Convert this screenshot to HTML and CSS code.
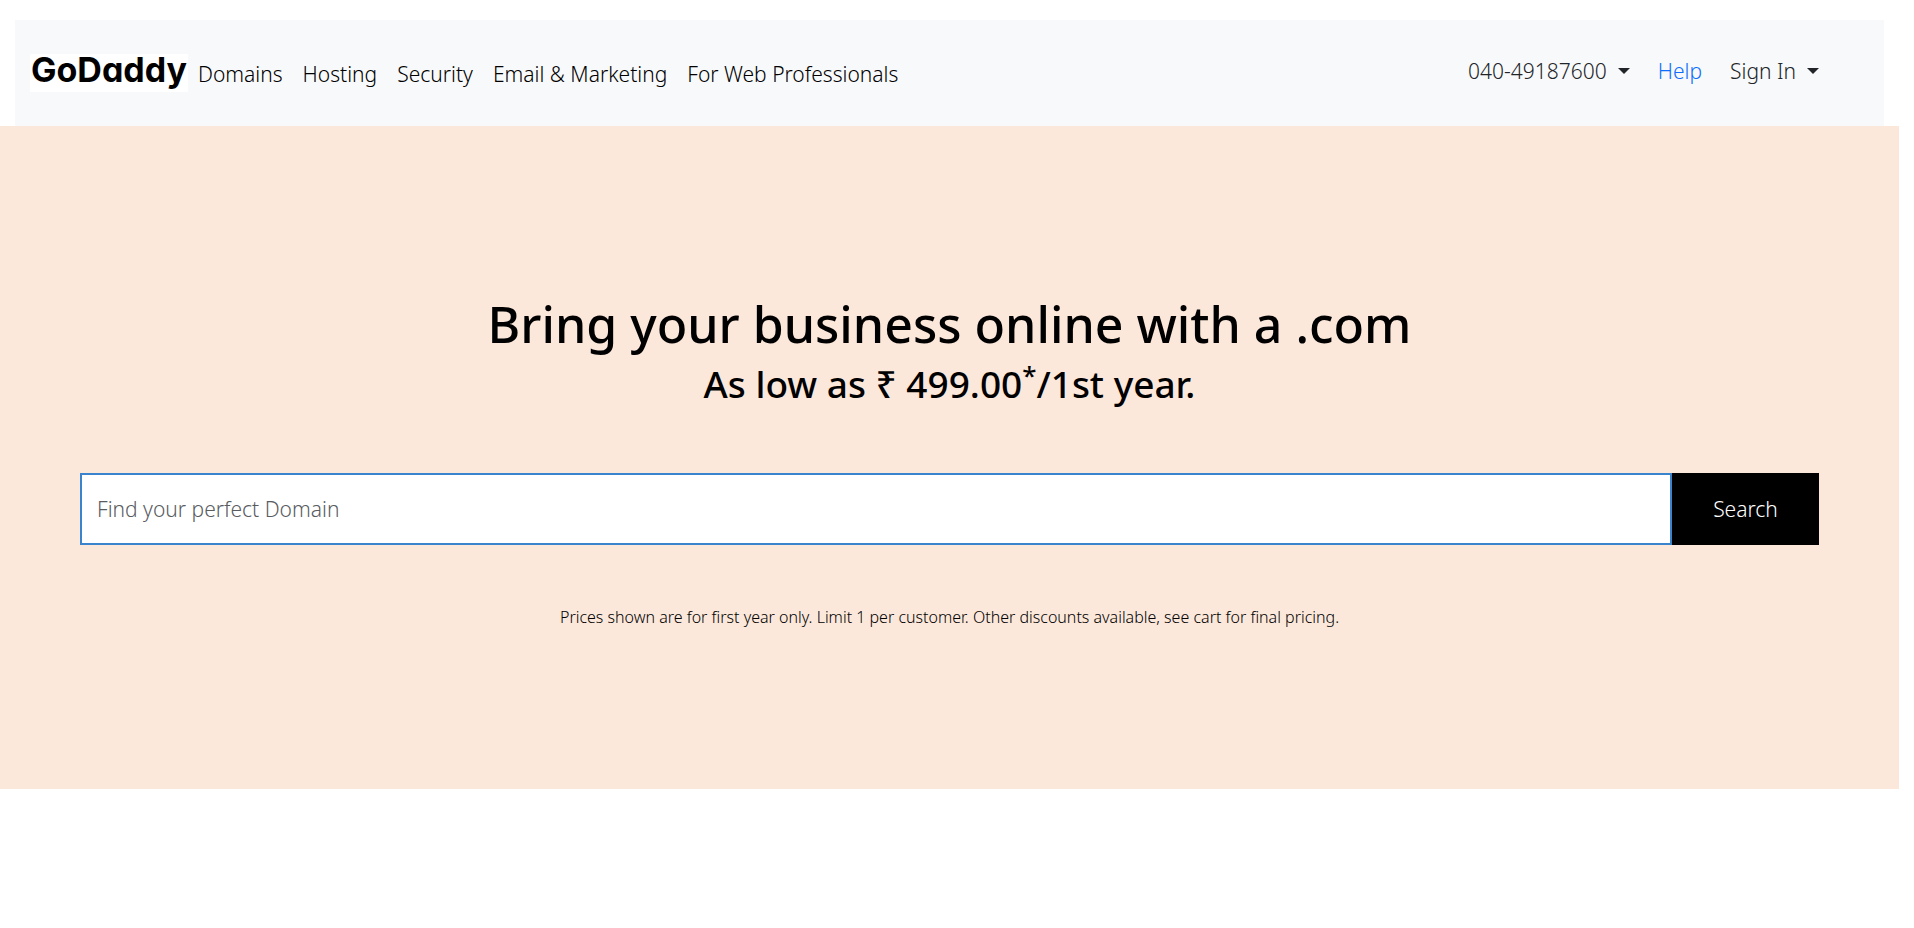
FILE: index.html
```html
<!DOCTYPE html>
<html lang="en">
<head>
<meta charset="utf-8">
<title>GoDaddy</title>
<link rel="stylesheet" href="styles.css">
</head>
<body>
<header class="topbar">
  <a class="logo" href="#">GoDaddy</a>
  <nav class="main-nav" aria-label="Main">
    <a href="#">Domains</a>
    <a href="#">Hosting</a>
    <a href="#">Security</a>
    <a href="#">Email &amp; Marketing</a>
    <a href="#">For Web Professionals</a>
  </nav>
  <div class="account">
    <button class="toggle" type="button">040-49187600</button>
    <a class="help" href="#">Help</a>
    <button class="toggle" type="button">Sign In</button>
  </div>
</header>
<main class="hero">
  <h1 class="title">Bring your business online with a .com</h1>
  <h2 class="subtitle">As low as ₹ 499.00<sup>*</sup>/1st year.</h2>
  <form class="search">
    <input class="search-input" type="text" placeholder="Find your perfect Domain" aria-label="Find your perfect Domain">
    <button class="search-button" type="button">Search</button>
  </form>
  <p class="note">Prices shown are for first year only. Limit 1 per customer. Other discounts available, see cart for final pricing.</p>
</main>
</body>
</html>
```
FILE: styles.css
```css
* {
  box-sizing: border-box;
}

body {
  margin: 0;
  padding: 20px 15px 0 0;
  background: #fff;
  color: #000;
  font: 350 21px/32px "Noto Sans", "Open Sans", sans-serif;
}

a {
  color: inherit;
  text-decoration: none;
}

.topbar {
  display: flex;
  align-items: flex-start;
  height: 106px;
  margin: 0 15px;
  padding: 34px 65px 0 15px;
  background: #f8f9fa;
}

.logo {
  min-width: 158px;
  height: 38px;
  background: #fff;
  font: 750 34px/32px Inter, sans-serif;
  font-feature-settings: "cv11";
  text-align: center;
}

.main-nav {
  display: flex;
  gap: 20px;
  padding: 4px 0 0 10px;
}

.account {
  display: flex;
  gap: 28px;
  margin-left: auto;
  padding-top: 1px;
  color: #212529;
}

.toggle {
  display: flex;
  align-items: center;
  gap: 11px;
  padding: 0;
  border: 0;
  background: none;
  color: inherit;
  font: inherit;
}

.toggle::after {
  content: "";
  border-top: 6px solid;
  border-right: 6px solid transparent;
  border-left: 6px solid transparent;
}

.help {
  color: #0d6efd;
}

.hero {
  padding: 168px 80px 160px;
  background: #fce8db;
  text-align: center;
}

.title {
  margin: 0;
  font-size: 50px;
  font-weight: 500;
  line-height: 60px;
}

.subtitle {
  margin: 7px 0 66px;
  font-size: 37px;
  font-weight: 500;
  line-height: 46px;
}

.subtitle sup {
  font-size: 26px;
  line-height: 0;
}

.search {
  display: flex;
}

.search-input {
  flex: 1;
  min-width: 0;
  height: 72px;
  padding: 0 15px;
  border: 2px solid #3984cc;
  border-radius: 0;
  background: #fff;
  font: inherit;
}

.search-input::placeholder {
  color: #595c5f;
  opacity: 1;
}

.search-button {
  width: 147px;
  border: 0;
  background: #000;
  color: #fff;
  font: inherit;
}

.note {
  margin: 60px 0 0;
  font-size: 16px;
  line-height: 24px;
}
```
